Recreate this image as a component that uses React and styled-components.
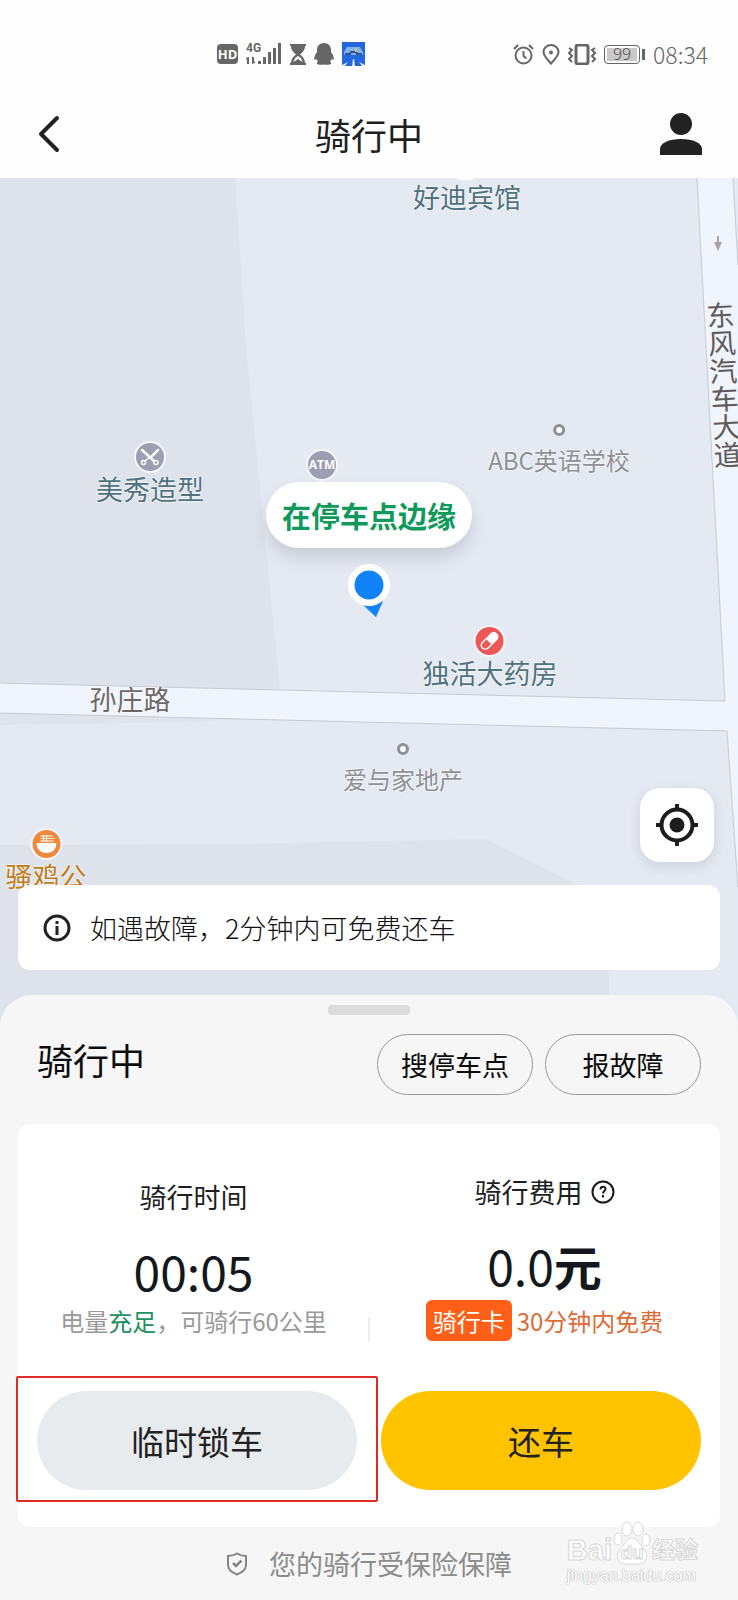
import React from "react";
import styled, { createGlobalStyle, css } from "styled-components";

const GlobalStyle = createGlobalStyle`
  * {
    box-sizing: border-box;
  }
  body {
    margin: 0;
    background: #f6f6f6;
    font-family: "Noto Sans CJK SC", "Noto Sans", sans-serif;
    color: #1f1f1f;
  }
  button {
    font-family: inherit;
    color: inherit;
    border: none;
    padding: 0;
    background: none;
    cursor: pointer;
  }
  svg {
    display: block;
    flex: none;
  }
`;

const Page = styled.div`
  display: flex;
  flex-direction: column;
  min-height: 100vh;
  position: relative;
  overflow-x: clip;
`;

const Top = styled.header`
  background: #fefefe;
`;

const StatusBar = styled.div`
  display: flex;
  justify-content: space-between;
  align-items: center;
  padding: 38px 30px 8px 217px;
  color: #666;
`;

const StatusGroup = styled.div`
  display: flex;
  align-items: center;
  gap: 8px;
`;

const HdTag = styled.span`
  width: 21px;
  height: 20px;
  border-radius: 4px;
  background: #666;
  color: #fff;
  font: bold 13px/20px "Open Sans", sans-serif;
  text-align: center;
`;

const Clock = styled.span`
  font-size: 23px;
  font-weight: 300;
  line-height: 32px;
`;

const Battery = styled.span`
  display: flex;
  align-items: center;
  gap: 2px;
  &::after {
    content: "";
    width: 3px;
    height: 11px;
    background: #666;
  }
`;

const BatteryLevel = styled.span`
  width: 36px;
  height: 19px;
  border: 1px solid #666;
  border-radius: 4px;
  background: #c9c9c9;
  box-shadow: inset 0 0 0 2px #fff;
  font: 300 16px/17px "Open Sans", sans-serif;
  text-align: center;
  color: #444;
`;

const NavBar = styled.nav`
  display: grid;
  grid-template-columns: 1fr auto 1fr;
  align-items: center;
  height: 100px;
  padding: 12px 36px 0;
`;

const NavTitle = styled.h1`
  margin: 0;
  font-size: 36px;
  font-weight: 400;
  line-height: 48px;
`;

const NavButton = styled.button`
  justify-self: ${p => p.side};
`;

const MapArea = styled.main`
  flex: 1;
  position: relative;
  display: flex;
  flex-direction: column;
  justify-content: flex-end;
  gap: 23px;
  min-height: 849px;
  padding: 0 18px 57px;
  background: #e4e9f2;
`;

const MapCanvas = styled.svg`
  position: absolute;
  top: 0;
  left: 0;
  width: 100%;
  height: 849px;
`;

const tones = {
  teal: css`
    color: #50727f;
    font-size: 27px;
  `,
  gray: css`
    color: #8d9095;
    font-size: 24px;
  `,
  road: css`
    color: #6c6866;
    font-size: 27px;
  `,
  food: css`
    color: #c07a17;
    font-size: 27px;
  `
};

const MAP_WIDTH = 738;

// a point of interest, centred on its place on the map
const Place = styled.div`
  position: absolute;
  left: ${p => (p.x / MAP_WIDTH) * 100}%;
  top: ${p => p.y}px;
  display: flex;
  flex-direction: column;
  align-items: center;
  gap: ${p => (p.tone === "gray" ? 8 : 0)}px;
  transform: translateX(-50%);
  white-space: nowrap;
  line-height: 32px;
  text-shadow: 0 0 2px #fff, 0 0 2px #fff;
  ${p => tones[p.tone]}
`;

const Pin = styled.span`
  display: grid;
  place-items: center;
  width: 32px;
  height: 32px;
  border: 2px solid #f6f7fa;
  border-radius: 50%;
  background: ${p => p.fill};
  color: #fff;
  font: bold 12px/28px "Open Sans", sans-serif;
  text-shadow: none;
`;

const Dot = styled.span`
  width: 12px;
  height: 12px;
  border: 3px solid #8d9095;
  border-radius: 50%;
  background: #fff;
`;

const Avenue = styled.div`
  position: absolute;
  top: 123px;
  left: 96%;
  writing-mode: vertical-rl;
  transform: rotate(-3deg);
  color: #5f5b59;
  font-size: 28px;
  line-height: 32px;
  white-space: nowrap;
`;

const Marker = styled.div`
  position: absolute;
  top: 304px;
  left: 50%;
  display: flex;
  flex-direction: column;
  align-items: center;
  gap: 16px;
  transform: translateX(-50%);
`;

const Bubble = styled.div`
  padding: 13px 16px;
  border-radius: 33px;
  background: #fff;
  box-shadow: 0 10px 16px rgba(60, 70, 90, 0.16);
  color: #0f9a5c;
  font-size: 29px;
  font-weight: 700;
  line-height: 40px;
  white-space: nowrap;
`;

const LocateButton = styled.button`
  position: relative;
  align-self: flex-end;
  display: grid;
  place-items: center;
  width: 74px;
  height: 74px;
  margin-right: 6px;
  border-radius: 20px;
  background: #fff;
  box-shadow: 0 4px 12px rgba(60, 70, 90, 0.14);
`;

const Tip = styled.p`
  position: relative;
  display: flex;
  align-items: center;
  gap: 19px;
  height: 85px;
  margin: 0;
  padding: 0 25px;
  border-radius: 12px;
  background: #fff;
  font-size: 27px;
  font-weight: 300;
  color: #111;
`;

const Sheet = styled.section`
  position: relative;
  margin-top: -32px;
  padding: 10px 18px 0;
  border-radius: 32px 32px 0 0;
  background: #f6f6f6;
`;

const Handle = styled.div`
  width: 82px;
  height: 10px;
  margin: 0 auto 19px;
  border-radius: 4px;
  background: #dcdcdc;
`;

const SheetHead = styled.div`
  display: flex;
  align-items: center;
  gap: 12px;
  padding: 0 19px;
  margin-bottom: 29px;
`;

const SheetTitle = styled.h2`
  flex: 1;
  margin: 0;
  padding-bottom: 12px;
  font-size: 36px;
  font-weight: 400;
  line-height: 48px;
  color: #0c0c0c;
`;

const PillButton = styled.button`
  width: 156px;
  height: 61px;
  border: 1px solid #999;
  border-radius: 31px;
  font-size: 27px;
  line-height: 36px;
  color: #0c0c0c;
`;

const Card = styled.div`
  padding: 48px 0 37px;
  border-radius: 12px;
  background: #fff;
`;

const Stats = styled.div`
  display: grid;
  grid-template-columns: 1fr 1fr;
  align-items: end;
  margin-bottom: 50px;
`;

const Stat = styled.div`
  display: flex;
  flex-direction: column;
  align-items: center;
  position: relative;
  & + &::before {
    content: "";
    position: absolute;
    left: -1px;
    bottom: 0;
    width: 2px;
    height: 24px;
    background: #ececec;
  }
`;

const StatLabel = styled.div`
  display: flex;
  align-items: center;
  gap: 8px;
  margin-bottom: 22px;
  font-size: 27px;
  line-height: 40px;
`;

const StatValue = styled.div`
  margin-bottom: 4px;
  font-size: 48px;
  line-height: 62px;
  color: #14181c;
`;

const StatNote = styled.div`
  display: flex;
  align-items: center;
  padding-bottom: ${p => (p.hot ? 0 : 4)}px;
  font-size: 24px;
  line-height: 32px;
  color: ${p => (p.hot ? "#dc6c37" : "#999")};
  white-space: nowrap;
`;

const Good = styled.span`
  color: #21915f;
`;

const CardTag = styled.span`
  margin-right: 5px;
  padding: 0 7px;
  border-radius: 6px;
  background: #ff5f17;
  color: #fff;
  line-height: 41px;
`;

const Actions = styled.div`
  display: grid;
  grid-template-columns: 1fr 1fr;
  gap: 24px;
  padding: 0 19px;
`;

const Highlight = styled.div`
  position: relative;
  display: grid;
  &::after {
    content: "";
    position: absolute;
    inset: -15px -21px -12px;
    border: 2px solid #e02a26;
    border-radius: 2px;
    pointer-events: none;
  }
`;

const ActionButton = styled.button`
  height: 99px;
  border-radius: 50px;
  background: ${p => (p.primary ? "#ffc300" : "#e8ebee")};
  font-size: 33px;
  line-height: 44px;
  color: #222;
`;

const Insurance = styled.footer`
  display: flex;
  justify-content: center;
  align-items: center;
  gap: 21px;
  height: 73px;
  font-size: 27px;
  color: #8c8c8c;
`;

const Watermark = styled.div`
  position: absolute;
  right: 40px;
  bottom: 13px;
  color: #fff;
  font-family: "Liberation Sans", "Noto Sans CJK SC", sans-serif;
`;

const WatermarkLogo = styled.div`
  display: flex;
  align-items: flex-end;
  font-size: 29px;
  font-weight: 700;
  line-height: 30px;
  -webkit-text-stroke: 1px #d6d6d6;
`;

const WatermarkName = styled.span`
  font-size: 23px;
`;

const WatermarkSite = styled.div`
  font-size: 16px;
  line-height: 22px;
  text-shadow: 0 0 1px #bbb, 0 0 1px #bbb, 0 0 2px #ccc;
`;

const SignalIcon = () => (
  <svg width="36" height="24" viewBox="0 0 36 24" fill="#666">
    <text x="0" y="10" fontSize="12" fontWeight="700" fontFamily="Roboto">
      4G
    </text>
    <path d="M3 15v7H1v-5l-1 1v-2zM6 22v-7h2v5l1-1v2z" />
    <rect x="12" y="19" width="3" height="3" />
    <rect x="17" y="15" width="3" height="7" />
    <rect x="22" y="10" width="3" height="12" />
    <rect x="27" y="6" width="3" height="16" />
    <rect x="32" y="1" width="3" height="21" />
  </svg>
);

const HourglassIcon = () => (
  <svg width="16" height="21" viewBox="0 0 16 21">
    <path fill="#666" d="M0 0h16v2h-1c0 4-2 6-5 8.500 3 2 5 5 5 8.500h1v2H0v-2h1c0-3.500 2-6.500 5-8.500C3 8 1 6 1 2H0z" />
    <path fill="#fefefe" d="M8 12c2 1 4 3 4.500 6L8 15l-4.500 3C4 15 6 13 8 12z" />
  </svg>
);

const PenguinIcon = () => (
  <svg width="20" height="22" viewBox="0 0 20 22" fill="#666">
    <path d="M10 0c4.500 0 7 3 7 7v2c1.500 2 2.800 4.500 2.800 7 0 1.500-1 1.500-2.200-.2-.3 1-.8 2-1.600 2.800.8.500 1.200 1 1.200 1.600C17.200 22 12 22 10 21.500 8 22 2.800 22 2.800 20.200c0-.6.4-1.100 1.200-1.600-.8-.8-1.300-1.800-1.600-2.800C1.200 17.500.2 17.500.2 16c0-2.500 1.300-5 2.800-7V7c0-4 2.500-7 7-7z" />
  </svg>
);

const RoadAppIcon = () => (
  <svg width="23" height="24" viewBox="0 0 23 24">
    <rect width="23" height="24" fill="#2467dc" />
    <path d="M5 5h13l3 5v3H2v-3z" fill="#7db4ee" />
    <path d="M3 12h5l1-2h5l1 2h5" fill="none" stroke="#33549c" strokeWidth="2" />
    <path d="M13 5l3 4-3 1z" fill="#e6c26a" />
    <path d="M11 17h1l1 7h-3zM6 20l-6 3v1h3zM17 20l6 3v1h-3z" fill="#dfeafc" />
  </svg>
);

const AlarmIcon = () => (
  <svg width="21" height="21" viewBox="0 0 21 21" fill="none" stroke="#666" strokeWidth="2">
    <circle cx="10.500" cy="11.500" r="8" />
    <path d="M10.500 7v5l3 2.500M1 5l4-4M20 5l-4-4" />
  </svg>
);

const PinIcon = () => (
  <svg width="18" height="21" viewBox="0 0 18 21" fill="none" stroke="#666" strokeWidth="2">
    <path d="M9 19.500C6 16 1.500 12 1.500 8a7.500 7 0 0 1 15 0c0 4-4.500 8-7.500 11.500z" />
    <circle cx="9" cy="8.500" r="1" fill="#666" />
  </svg>
);

const VibrateIcon = () => (
  <svg width="28" height="21" viewBox="0 0 28 21" fill="none" stroke="#666" strokeWidth="2">
    <rect x="8" y="1" width="12" height="19" rx="2" strokeWidth="3" />
    <path d="M1 4l3 2-3 3 3 3-3 3 3 3M27 4l-3 2 3 3-3 3 3 3-3 3" />
  </svg>
);

const BackIcon = () => (
  <svg width="24" height="38" viewBox="0 0 24 38" fill="none" stroke="#222" strokeWidth="4" strokeLinecap="round" strokeLinejoin="round">
    <path d="M21 3L5 19l16 16" />
  </svg>
);

const UserIcon = () => (
  <svg width="42" height="42" viewBox="0 0 42 42" fill="#222">
    <circle cx="21" cy="11" r="11" />
    <path d="M0 42v-6c0-6 9-10 21-10s21 4 21 10v6z" />
  </svg>
);

const ScissorsIcon = () => (
  <svg width="20" height="20" viewBox="0 0 20 20" fill="none" stroke="#fff" strokeLinecap="round">
    <path d="M2 3l12 11M18 3l-6 6" strokeWidth="2.500" />
    <path d="M10 10l-5 4" strokeWidth="1.500" />
    <circle cx="3.500" cy="15.500" r="2" strokeWidth="1.500" />
    <circle cx="16" cy="15.500" r="2" strokeWidth="1.500" />
  </svg>
);

const PillIcon = () => (
  <svg width="22" height="22" viewBox="0 0 22 22">
    <g transform="rotate(-45 11 11)">
      <rect x="1" y="7" width="20" height="8" rx="4" fill="none" stroke="#fff" strokeWidth="1.500" />
      <path d="M10 7h7a4 4 0 0 1 0 8h-7z" fill="#fff" />
    </g>
  </svg>
);

const BowlIcon = () => (
  <svg width="20" height="20" viewBox="0 0 20 20">
    <path d="M0 9h20c0 6-4 10-10 10S0 15 0 9z" fill="#fff" />
    <path d="M4 7h13M4 4.500h14M4 2h12M7 1v7M10 1v7" stroke="#fff" strokeWidth="1" />
  </svg>
);

const PositionIcon = () => (
  <svg width="42" height="54" viewBox="0 0 42 54">
    <path d="M14 40l21-3-7 16z" fill="#1182f8" />
    <circle cx="21" cy="21" r="21" fill="#fff" />
    <circle cx="21" cy="21" r="14.500" fill="#1182f8" />
  </svg>
);

const LocateIcon = () => (
  <svg width="42" height="42" viewBox="0 0 42 42" fill="none" stroke="#1d1d1d">
    <circle cx="21" cy="21" r="15.500" strokeWidth="4" />
    <circle cx="21" cy="21" r="7.500" fill="#1d1d1d" stroke="none" />
    <path d="M21 0v7M21 35v7M0 21h7M35 21h7" strokeWidth="4" />
  </svg>
);

const InfoIcon = () => (
  <svg width="28" height="28" viewBox="0 0 28 28" fill="none" stroke="#222" strokeWidth="3">
    <circle cx="14" cy="14" r="12" />
    <path d="M14 12v9M14 7v3" />
  </svg>
);

const QuestionIcon = () => (
  <svg width="24" height="24" viewBox="0 0 24 24" fill="none" stroke="#1a1a1a" strokeWidth="2">
    <circle cx="12" cy="12" r="10.500" />
    <path d="M9.500 9.500c0-3.500 5-3.500 5-.5 0 2-2.500 2-2.500 4.500M12 15v2.500" />
  </svg>
);

const ShieldIcon = () => (
  <svg width="22" height="24" viewBox="0 0 22 24" fill="none" stroke="#858585" strokeWidth="2">
    <path d="M11 1.500C8 3.500 5 4 2 4v9c0 5 5 8 9 9.500 4-1.500 9-4.500 9-9.500V4c-3 0-6-.5-9-2.500z" />
    <path d="M7 11l3 3 5.500-5.500" strokeWidth="2.500" />
  </svg>
);

const PawIcon = () => (
  <svg width="40" height="44" viewBox="0 0 38 44" fill="#fff" stroke="#d6d6d6">
    <ellipse cx="14" cy="8" rx="5" ry="7" />
    <ellipse cx="25" cy="8" rx="5" ry="7" />
    <ellipse cx="5" cy="18" rx="4" ry="6" />
    <ellipse cx="33" cy="19" rx="4" ry="6" />
    <path d="M19 17c6 0 7 6 11 10 5 5 5 15-3 16H11c-8-1-8-11-3-16 4-4 5-10 11-10z" />
    <text x="19" y="38" textAnchor="middle" fontSize="19" fontWeight="700">
      du
    </text>
  </svg>
);

const MapDrawing = () => (
  <MapCanvas viewBox="0 0 738 849" preserveAspectRatio="none" aria-hidden="true">
    <path d="M0 0H235L246 170L280 513L0 505z" fill="#dde2eb" />
    <path d="M0 535L235 541L200 544L0 547z" fill="#dfe3ec" />
    <path d="M0 667L240 666L485 661L573 705L609 722V849H0z" fill="#dde2eb" />
    <path d="M0 505L725 523L697 0H733L738 87V709L727 553L0 535z" fill="#f0f4fd" />
    <path d="M0 505L280 512L725 523L697 0M0 535L240 541L727 553L738 709M733 0L738 87" fill="none" stroke="#c5cad4" />
    <path d="M718 58v9" stroke="#aaa0a6" strokeWidth="2" />
    <path d="M714 64h8l-4 9z" fill="#aaa0a6" />
    <path d="M457 0h18c-4 3-14 3-18 0z" fill="#fff" />
  </MapCanvas>
);

const App = () => {
  return (
    <Page>
      <GlobalStyle />
      <Top>
        <StatusBar>
          <StatusGroup>
            <HdTag>HD</HdTag>
            <SignalIcon />
            <HourglassIcon />
            <PenguinIcon />
            <RoadAppIcon />
          </StatusGroup>
          <StatusGroup>
            <AlarmIcon />
            <PinIcon />
            <VibrateIcon />
            <Battery>
              <BatteryLevel>99</BatteryLevel>
            </Battery>
            <Clock>08:34</Clock>
          </StatusGroup>
        </StatusBar>
        <NavBar>
          <NavButton side="start" aria-label="返回">
            <BackIcon />
          </NavButton>
          <NavTitle>骑行中</NavTitle>
          <NavButton side="end" aria-label="我的">
            <UserIcon />
          </NavButton>
        </NavBar>
      </Top>

      <MapArea>
        <MapDrawing />
        <Place tone="teal" x={467} y={3}>
          好迪宾馆
        </Place>
        <Place tone="teal" x={150} y={263}>
          <Pin fill="#9c9fb2">
            <ScissorsIcon />
          </Pin>
          美秀造型
        </Place>
        <Place tone="teal" x={322} y={271}>
          <Pin fill="#9c9fb2">ATM</Pin>
        </Place>
        <Place tone="gray" x={559} y={246}>
          <Dot />
          ABC英语学校
        </Place>
        <Place tone="teal" x={490} y={447}>
          <Pin fill="#ee5757">
            <PillIcon />
          </Pin>
          独活大药房
        </Place>
        <Place tone="road" x={130} y={505}>
          孙庄路
        </Place>
        <Place tone="gray" x={403} y={565}>
          <Dot />
          爱与家地产
        </Place>
        <Place tone="food" x={46} y={650}>
          <Pin fill="#ee8a3c">
            <BowlIcon />
          </Pin>
          骚鸡公
        </Place>
        <Avenue>东风汽车大道</Avenue>
        <Marker>
          <Bubble>在停车点边缘</Bubble>
          <PositionIcon />
        </Marker>
        <LocateButton aria-label="定位">
          <LocateIcon />
        </LocateButton>
        <Tip>
          <InfoIcon />
          如遇故障，2分钟内可免费还车
        </Tip>
      </MapArea>

      <Sheet>
        <Handle />
        <SheetHead>
          <SheetTitle>骑行中</SheetTitle>
          <PillButton>搜停车点</PillButton>
          <PillButton>报故障</PillButton>
        </SheetHead>
        <Card>
          <Stats>
            <Stat>
              <StatLabel>骑行时间</StatLabel>
              <StatValue>00:05</StatValue>
              <StatNote>
                电量<Good>充足</Good>，可骑行60公里
              </StatNote>
            </Stat>
            <Stat>
              <StatLabel>
                骑行费用
                <QuestionIcon />
              </StatLabel>
              <StatValue>
                0.0<b>元</b>
              </StatValue>
              <StatNote hot>
                <CardTag>骑行卡</CardTag>
                30分钟内免费
              </StatNote>
            </Stat>
          </Stats>
          <Actions>
            <Highlight>
              <ActionButton>临时锁车</ActionButton>
            </Highlight>
            <ActionButton primary>还车</ActionButton>
          </Actions>
        </Card>
        <Insurance>
          <ShieldIcon />
          您的骑行受保险保障
        </Insurance>
      </Sheet>

      <Watermark>
        <WatermarkLogo>
          Bai
          <PawIcon />
          <WatermarkName>经验</WatermarkName>
        </WatermarkLogo>
        <WatermarkSite>jingyan.baidu.com</WatermarkSite>
      </Watermark>
    </Page>
  );
};

export default App;
